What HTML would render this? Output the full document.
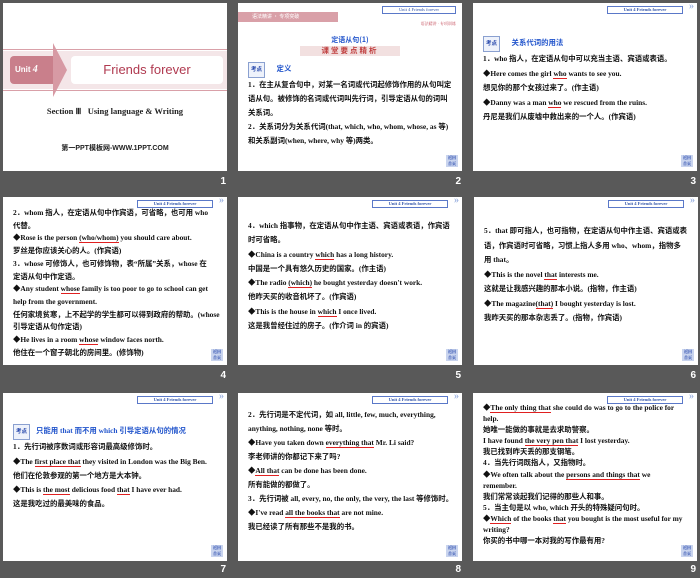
<!DOCTYPE html>
<html><head><meta charset="utf-8"><style>
*{margin:0;padding:0;box-sizing:border-box}
body{width:700px;height:578px;background:#595959;position:relative;overflow:hidden;font-family:"Liberation Serif","Noto Serif CJK SC","Noto Sans CJK SC",serif}
.s{position:absolute;width:224px;height:168px;background:#fff;overflow:hidden}
.n{position:absolute;color:#fff;font:bold 10px "Liberation Sans",sans-serif;width:20px;text-align:right}
.hd{position:absolute;right:14px;top:3px;width:76px;height:8px;border:1px solid #5a78c8;font-size:4.5px;color:#3355aa;text-align:center;line-height:6px;font-weight:bold}
.hd:after{content:"»";position:absolute;right:-12px;top:-3px;font-size:10px;color:#9ab0e0}
.t{position:absolute;left:10px;width:206px;font-size:7.4px;font-weight:bold;color:#111;font-family:"Liberation Serif","Noto Sans CJK SC",serif;text-align:justify}
.t p{white-space:nowrap;overflow:visible}
.u{border-bottom:1px solid #e02020}
.ic{position:absolute;right:4px;bottom:4px;width:12px;height:12px;background:#c9d4ee;color:#2244aa;font-size:4px;line-height:6px;text-align:center;font-weight:bold}
.kd{display:inline-block;border:1px solid #8aa0d0;background:#eef2fb;color:#2244aa;font-size:5.5px;padding:0 2px;margin-right:6px}
.bl{color:#2255cc}
</style></head><body>

<!-- slide 1 -->
<div class="s" style="left:3px;top:3px">
 <div style="position:absolute;left:0;top:46px;width:224px;height:1px;background:#d9a0a8"></div>
 <div style="position:absolute;left:0;top:87px;width:224px;height:1px;background:#d9a0a8"></div>
 <div style="position:absolute;left:0;top:48px;width:224px;height:38px;background:#f4e6e8"></div>
 <div style="position:absolute;left:7px;top:53px;width:50px;height:28px;background:#c97f8b;border-radius:4px"></div>
 <div style="position:absolute;left:50px;top:40px;width:0;height:0;border-left:14px solid #d79aa4;border-top:27px solid transparent;border-bottom:27px solid transparent"></div>
 <div style="position:absolute;left:12px;top:61px;color:#fff;font:bold 8px 'Liberation Sans',sans-serif">Unit <i style="font-family:'Liberation Serif';font-size:10px">4</i></div>
 <div style="position:absolute;left:68px;top:53px;width:152px;height:28px;background:#fff;border-radius:4px;text-align:center;color:#b03a50;font:13px/28px 'Liberation Sans',sans-serif">Friends forever</div>
 <div style="position:absolute;left:0;width:224px;top:103px;text-align:center;font:bold 8.5px 'Liberation Serif',serif;color:#222">Section Ⅲ &nbsp; Using language &amp; Writing</div>
 <div style="position:absolute;left:0;width:224px;top:140px;text-align:center;font:bold 7px 'Liberation Sans','Noto Sans CJK SC',sans-serif;color:#222">第一PPT模板网-WWW.1PPT.COM</div>
</div>
<div class="n" style="left:206px;top:176px">1</div>

<!-- slide 2 -->
<div class="s" style="left:238px;top:3px">
 <div style="position:absolute;left:0;top:9px;width:100px;height:10px;background:#d9a0a8;color:#fff;font-size:5px;line-height:10px;padding-left:14px;font-family:'Noto Sans CJK SC',sans-serif">语法精讲 · 专项突破</div>
 <div style="position:absolute;right:6px;top:3px;width:74px;height:8px;border:1px solid #5a78c8;font-size:4.5px;color:#3355aa;text-align:center;line-height:6px">Unit 4 Friends forever</div>
 <div style="position:absolute;right:6px;top:18px;font-size:4px;color:#c04050">语法精讲 · 专项训练</div>
 <div style="position:absolute;left:0;width:224px;top:32px;text-align:center;font-size:7px;font-weight:bold;color:#2255cc;font-family:'Noto Sans CJK SC',sans-serif">定语从句(1)</div>
 <div style="position:absolute;left:62px;top:43px;width:100px;height:10px;background:#f2e0e0;text-align:center;font-size:7.5px;font-weight:bold;color:#c04040;line-height:10px;font-family:'Noto Sans CJK SC',sans-serif;letter-spacing:2px">课堂要点精析</div>
 <div class="t" style="top:59px;line-height:14px">
  <p><span class="kd">考点</span><span class="bl">&nbsp;&nbsp;&nbsp;定义</span></p>
  <p>1．在主从复合句中，对某一名词或代词起修饰作用的从句叫定</p>
  <p>语从句。被修饰的名词或代词叫先行词，引导定语从句的词叫</p>
  <p>关系词。</p>
  <p>2．关系词分为关系代词(that, which, who, whom, whose, as 等)</p>
  <p>和关系副词(when, where, why 等)两类。</p>
 </div>
 <div class="ic">返回<br>首页</div>
</div>
<div class="n" style="left:441px;top:176px">2</div>

<!-- slide 3 -->
<div class="s" style="left:473px;top:3px">
 <div class="hd">Unit 4 Friends forever</div>
 <div class="t" style="top:33px;line-height:14.4px">
  <p><span class="kd">考点</span><span class="bl">&nbsp;&nbsp;&nbsp;关系代词的用法</span></p>
  <p>1．who 指人，在定语从句中可以充当主语、宾语或表语。</p>
  <p>◆Here comes the girl <span class="u">who</span> wants to see you.</p>
  <p>想见你的那个女孩过来了。(作主语)</p>
  <p>◆Danny was a man <span class="u">who</span> we rescued from the ruins.</p>
  <p>丹尼是我们从废墟中救出来的一个人。(作宾语)</p>
 </div>
 <div class="ic">返回<br>首页</div>
</div>
<div class="n" style="left:676px;top:176px">3</div>

<!-- slide 4 -->
<div class="s" style="left:3px;top:197px">
 <div class="hd">Unit 4 Friends forever</div>
 <div class="t" style="top:10px;line-height:12.7px">
  <p>2．whom 指人，在定语从句中作宾语，可省略，也可用 who</p>
  <p>代替。</p>
  <p>◆Rose is the person <span class="u">(who/whom)</span> you should care about.</p>
  <p>罗丝是你应该关心的人。(作宾语)</p>
  <p>3．whose 可修饰人，也可修饰物，表“所属”关系，whose 在</p>
  <p>定语从句中作定语。</p>
  <p>◆Any student <span class="u">whose</span> family is too poor to go to school can get</p>
  <p>help from the government.</p>
  <p>任何家境贫寒，上不起学的学生都可以得到政府的帮助。(whose</p>
  <p>引导定语从句作定语)</p>
  <p>◆He lives in a room <span class="u">whose</span> window faces north.</p>
  <p>他住在一个窗子朝北的房间里。(修饰物)</p>
 </div>
 <div class="ic">返回<br>首页</div>
</div>
<div class="n" style="left:206px;top:370px">4</div>

<!-- slide 5 -->
<div class="s" style="left:238px;top:197px">
 <div class="hd">Unit 4 Friends forever</div>
 <div class="t" style="top:22px;line-height:14.3px">
  <p>4．which 指事物，在定语从句中作主语、宾语或表语，作宾语</p>
  <p>时可省略。</p>
  <p>◆China is a country <span class="u">which</span> has a long history.</p>
  <p>中国是一个具有悠久历史的国家。(作主语)</p>
  <p>◆The radio <span class="u">(which)</span> he bought yesterday doesn't work.</p>
  <p>他昨天买的收音机坏了。(作宾语)</p>
  <p>◆This is the house in <span class="u">which</span> I once lived.</p>
  <p>这是我曾经住过的房子。(作介词 in 的宾语)</p>
 </div>
 <div class="ic">返回<br>首页</div>
</div>
<div class="n" style="left:441px;top:370px">5</div>

<!-- slide 6 -->
<div class="s" style="left:474px;top:197px">
 <div class="hd">Unit 4 Friends forever</div>
 <div class="t" style="top:27px;line-height:14.5px">
  <p>5．that 即可指人，也可指物，在定语从句中作主语、宾语或表</p>
  <p>语，作宾语时可省略，习惯上指人多用 who、whom，指物多</p>
  <p>用 that。</p>
  <p>◆This is the novel <span class="u">that</span> interests me.</p>
  <p>这就是让我感兴趣的那本小说。(指物，作主语)</p>
  <p>◆The magazine<span class="u">(that)</span> I bought yesterday is lost.</p>
  <p>我昨天买的那本杂志丢了。(指物，作宾语)</p>
 </div>
 <div class="ic">返回<br>首页</div>
</div>
<div class="n" style="left:676px;top:370px">6</div>

<!-- slide 7 -->
<div class="s" style="left:3px;top:393px">
 <div class="hd">Unit 4 Friends forever</div>
 <div class="t" style="top:31px;line-height:14.3px">
  <p><span class="kd">考点</span><span class="bl">只能用 that 而不用 which 引导定语从句的情况</span></p>
  <p>1．先行词被序数词或形容词最高级修饰时。</p>
  <p>◆The <span class="u">first place that</span> they visited in London was the Big Ben.</p>
  <p>他们在伦敦参观的第一个地方是大本钟。</p>
  <p>◆This is <span class="u">the most</span> delicious food <span class="u">that</span> I have ever had.</p>
  <p>这是我吃过的最美味的食品。</p>
 </div>
 <div class="ic">返回<br>首页</div>
</div>
<div class="n" style="left:206px;top:564px">7</div>

<!-- slide 8 -->
<div class="s" style="left:238px;top:393px">
 <div class="hd">Unit 4 Friends forever</div>
 <div class="t" style="top:15px;line-height:14px">
  <p>2．先行词是不定代词，如 all, little, few, much, everything,</p>
  <p>anything, nothing, none 等时。</p>
  <p>◆Have you taken down <span class="u">everything that</span> Mr. Li said?</p>
  <p>李老师讲的你都记下来了吗?</p>
  <p>◆<span class="u">All that</span> can be done has been done.</p>
  <p>所有能做的都做了。</p>
  <p>3．先行词被 all, every, no, the only, the very, the last 等修饰时。</p>
  <p>◆I've read <span class="u">all the books that</span> are not mine.</p>
  <p>我已经读了所有那些不是我的书。</p>
 </div>
 <div class="ic">返回<br>首页</div>
</div>
<div class="n" style="left:441px;top:564px">8</div>

<!-- slide 9 -->
<div class="s" style="left:473px;top:393px">
 <div class="hd">Unit 4 Friends forever</div>
 <div class="t" style="top:9px;line-height:11.1px">
  <p>◆<span class="u">The only thing that</span> she could do was to go to the police for</p>
  <p>help.</p>
  <p>她唯一能做的事就是去求助警察。</p>
  <p>I have found <span class="u">the very pen that</span> I lost yesterday.</p>
  <p>我已找到昨天丢的那支钢笔。</p>
  <p>4．当先行词既指人，又指物时。</p>
  <p>◆We often talk about the <span class="u">persons and things that</span> we</p>
  <p>remember.</p>
  <p>我们常常谈起我们记得的那些人和事。</p>
  <p>5．当主句是以 who, which 开头的特殊疑问句时。</p>
  <p>◆<span class="u">Which</span> of the books <span class="u">that</span> you bought is the most useful for my</p>
  <p>writing?</p>
  <p>你买的书中哪一本对我的写作最有用?</p>
 </div>
 <div class="ic">返回<br>首页</div>
</div>
<div class="n" style="left:676px;top:564px">9</div>

</body></html>
